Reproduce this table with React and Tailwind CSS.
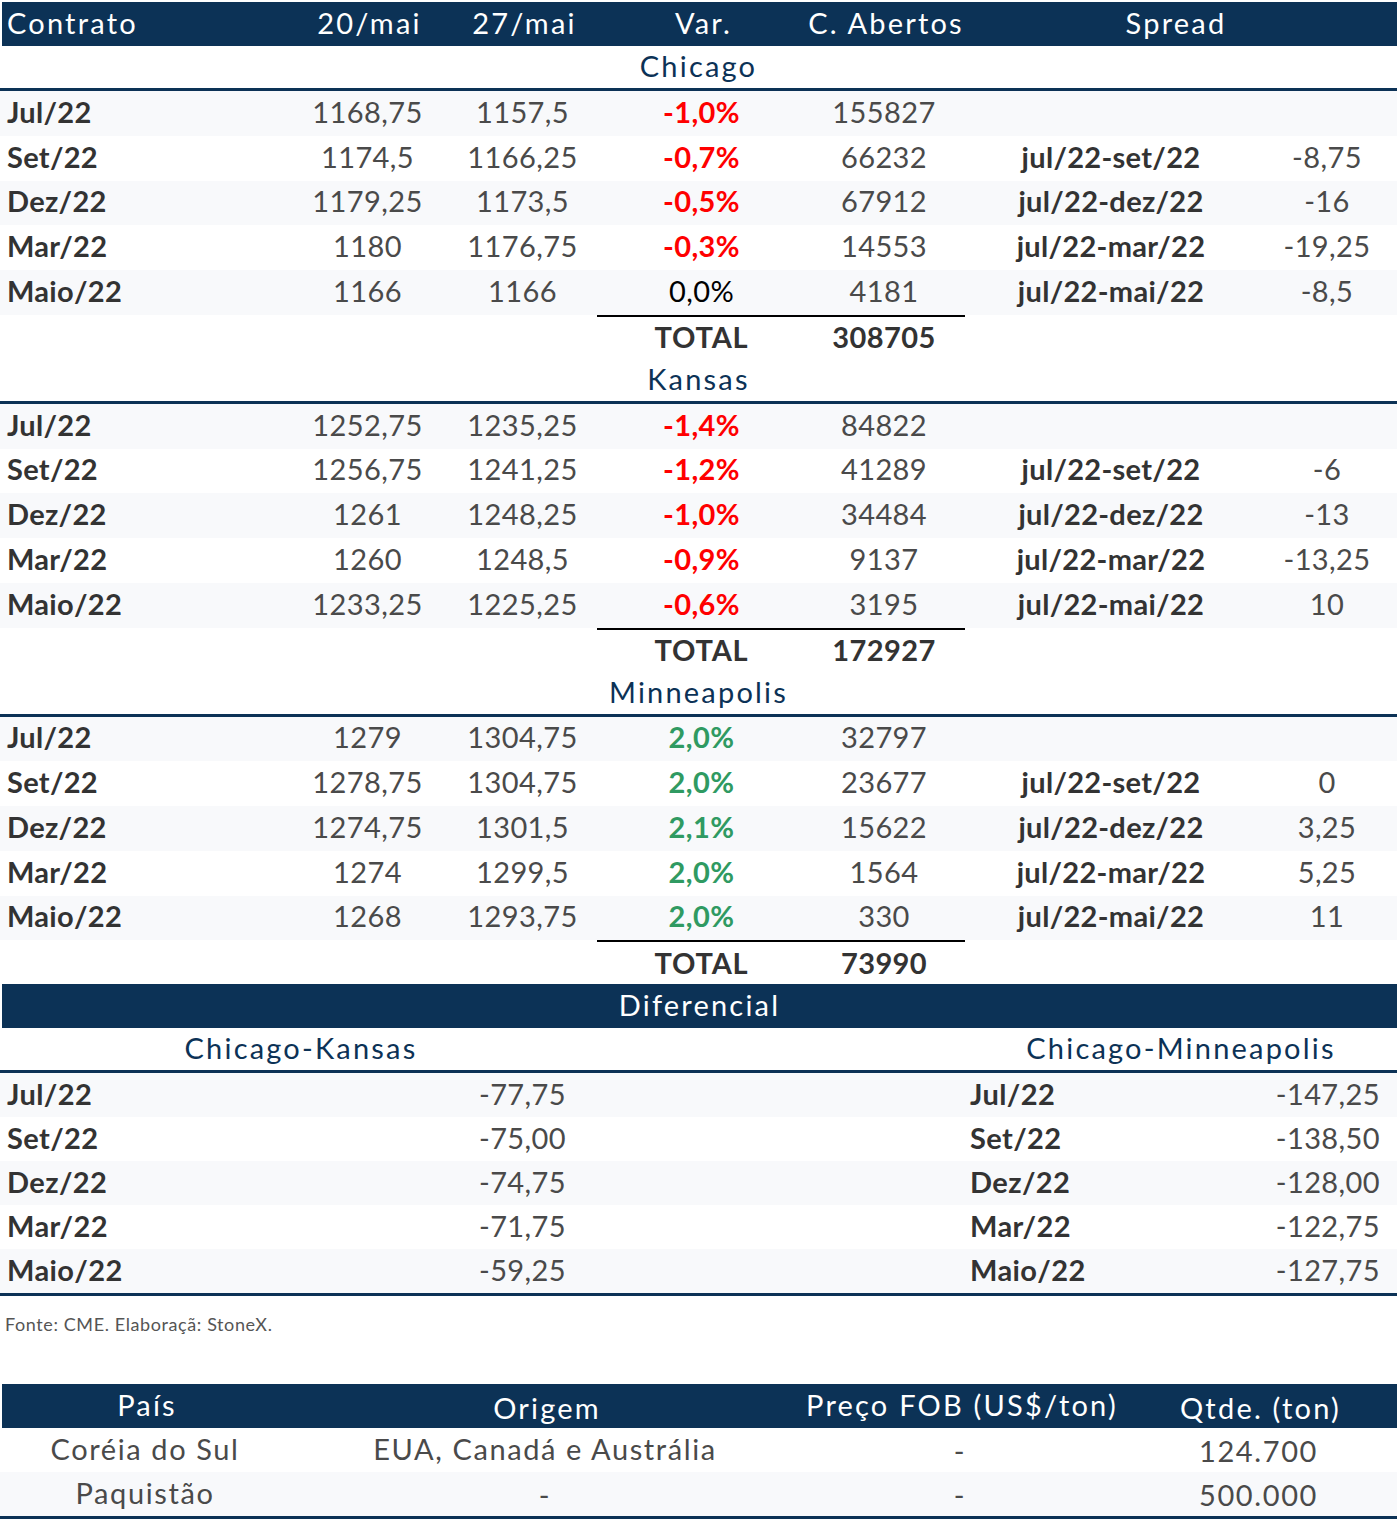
import React from "react";

const NAVY = "bg-[#0c3256]";
const COLS = "grid grid-cols-[290px_155px_155px_203px_162px_292px_140px]";
const HEAD = "text-[29px] tracking-[2.2px]";

const sections = [
  {
    title: "Chicago",
    total: "308705",
    rows: [
      ["Jul/22", "1168,75", "1157,5", "-1,0%", "155827", "", "", "r"],
      ["Set/22", "1174,5", "1166,25", "-0,7%", "66232", "jul/22-set/22", "-8,75", "r"],
      ["Dez/22", "1179,25", "1173,5", "-0,5%", "67912", "jul/22-dez/22", "-16", "r"],
      ["Mar/22", "1180", "1176,75", "-0,3%", "14553", "jul/22-mar/22", "-19,25", "r"],
      ["Maio/22", "1166", "1166", "0,0%", "4181", "jul/22-mai/22", "-8,5", "n"],
    ],
  },
  {
    title: "Kansas",
    total: "172927",
    rows: [
      ["Jul/22", "1252,75", "1235,25", "-1,4%", "84822", "", "", "r"],
      ["Set/22", "1256,75", "1241,25", "-1,2%", "41289", "jul/22-set/22", "-6", "r"],
      ["Dez/22", "1261", "1248,25", "-1,0%", "34484", "jul/22-dez/22", "-13", "r"],
      ["Mar/22", "1260", "1248,5", "-0,9%", "9137", "jul/22-mar/22", "-13,25", "r"],
      ["Maio/22", "1233,25", "1225,25", "-0,6%", "3195", "jul/22-mai/22", "10", "r"],
    ],
  },
  {
    title: "Minneapolis",
    total: "73990",
    rows: [
      ["Jul/22", "1279", "1304,75", "2,0%", "32797", "", "", "g"],
      ["Set/22", "1278,75", "1304,75", "2,0%", "23677", "jul/22-set/22", "0", "g"],
      ["Dez/22", "1274,75", "1301,5", "2,1%", "15622", "jul/22-dez/22", "3,25", "g"],
      ["Mar/22", "1274", "1299,5", "2,0%", "1564", "jul/22-mar/22", "5,25", "g"],
      ["Maio/22", "1268", "1293,75", "2,0%", "330", "jul/22-mai/22", "11", "g"],
    ],
  },
];

const diff = [
  ["Jul/22", "-77,75", "-147,25"],
  ["Set/22", "-75,00", "-138,50"],
  ["Dez/22", "-74,75", "-128,00"],
  ["Mar/22", "-71,75", "-122,75"],
  ["Maio/22", "-59,25", "-127,75"],
];

function varClass(k) {
  if (k === "r") return "text-[#ff0000] font-bold";
  if (k === "g") return "text-[#2f9a62] font-bold";
  return "text-black";
}

function Section({ s }) {
  return (
    <div>
      <div className={`h-[42px] pb-[3px] flex items-center justify-center text-[#0c3256] ${HEAD}`}>
        {s.title}
      </div>
      <div className="h-[3px] bg-[#0c3256]" />
      {s.rows.map((r, i) => (
        <div
          key={i}
          className={`${COLS} h-[44.75px] pb-[4px] items-center ${i % 2 === 0 ? "bg-[#f8f9fb]" : "bg-white"}`}
        >
          <div className="pl-[7px] font-bold text-[#333333] tracking-[0.3px]">{r[0]}</div>
          <div className="text-center text-[#4a4a4a]">{r[1]}</div>
          <div className="text-center text-[#4a4a4a]">{r[2]}</div>
          <div className={`text-center ${varClass(r[7])}`}>{r[3]}</div>
          <div className="text-center text-[#4a4a4a]">{r[4]}</div>
          <div className="text-center font-bold text-[#333333] tracking-[0.3px]">{r[5]}</div>
          <div className="text-center text-[#4a4a4a]">{r[6]}</div>
        </div>
      ))}
      <div className={`${COLS} h-[2px]`}>
        <div className="col-start-4 col-span-2 -ml-[3px] bg-black" />
      </div>
      <div className={`${COLS} h-[42px] pb-[2px] items-center`}>
        <div className="col-start-4 text-center font-bold text-[#333333] tracking-[0.8px]">TOTAL</div>
        <div className="text-center font-bold text-[#333333]">{s.total}</div>
      </div>
    </div>
  );
}

export default function App() {
  return (
    <div
      className="w-[1397px] bg-white pt-[2px] text-[29px] tracking-[0.4px] leading-none"
      style={{ fontFamily: "Lato, 'Open Sans', sans-serif" }}
    >
      {/* Header */}
      <div className={`${COLS} h-[44px] pb-[4px] items-center ${NAVY} text-white ml-[2px] ${HEAD}`}>
        <div className="pl-[5px]">Contrato</div>
        <div className="text-center">20/mai</div>
        <div className="text-center">27/mai</div>
        <div className="text-center">Var.</div>
        <div className="text-center">C. Abertos</div>
        <div className="col-span-2 text-center pr-[14px]">Spread</div>
      </div>

      {sections.map((s) => (
        <Section key={s.title} s={s} />
      ))}

      {/* Diferencial */}
      <div className={`h-[44px] pb-[3px] flex items-center justify-center ${NAVY} text-white ml-[2px] ${HEAD}`}>
        Diferencial
      </div>
      <div className={`${COLS} h-[42px] pb-[3px] items-center text-[#0c3256] ${HEAD}`}>
        <div className="col-span-3 text-center pl-[2px]">Chicago-Kansas</div>
        <div className="col-start-6 col-span-2 text-center">Chicago-Minneapolis</div>
      </div>
      <div className="h-[3px] bg-[#0c3256]" />
      {diff.map((r, i) => (
        <div
          key={i}
          className={`${COLS} h-[44px] pb-[3px] items-center ${i % 2 === 0 ? "bg-[#f8f9fb]" : "bg-white"}`}
        >
          <div className="pl-[7px] font-bold text-[#333333]">{r[0]}</div>
          <div />
          <div className="text-center text-[#4a4a4a]">{r[1]}</div>
          <div />
          <div />
          <div className="pl-[5px] font-bold text-[#333333]">{r[0]}</div>
          <div className="text-right pr-[17px] text-[#4a4a4a]">{r[2]}</div>
        </div>
      ))}
      <div className="h-[3px] bg-[#0c3256]" />

      <div className="h-[88px] pt-[19px] pl-[5px] text-[18px] tracking-[0.6px] leading-[18px] text-[#555555]">
        Fonte: CME. Elaboraçã: StoneX.
      </div>

      {/* Bottom table */}
      <div className={`grid grid-cols-[290px_510px_320px_277px] h-[44px] pb-[4px] items-center ${NAVY} text-white ml-[2px] ${HEAD}`}>
        <div className="text-center">País</div>
        <div className="text-center pt-[6px]">Origem</div>
        <div className="text-center">Preço FOB (US$/ton)</div>
        <div className="text-center pt-[6px]">Qtde. (ton)</div>
      </div>
      <div className="grid grid-cols-[290px_510px_320px_277px] h-[44px] pb-[4px] items-center bg-white text-[#4a4a4a] tracking-[1.6px]">
        <div className="text-center">Coréia do Sul</div>
        <div className="text-center">EUA, Canadá e Austrália</div>
        <div className="text-center pt-[4px]">-</div>
        <div className="text-center pt-[4px]">124.700</div>
      </div>
      <div className="grid grid-cols-[290px_510px_320px_277px] h-[44px] pb-[4px] items-center bg-[#f8f9fb] text-[#4a4a4a] tracking-[1.6px]">
        <div className="text-center">Paquistão</div>
        <div className="text-center pt-[4px]">-</div>
        <div className="text-center pt-[4px]">-</div>
        <div className="text-center pt-[4px]">500.000</div>
      </div>
      <div className="h-[3px] bg-[#0c3256]" />
    </div>
  );
}
